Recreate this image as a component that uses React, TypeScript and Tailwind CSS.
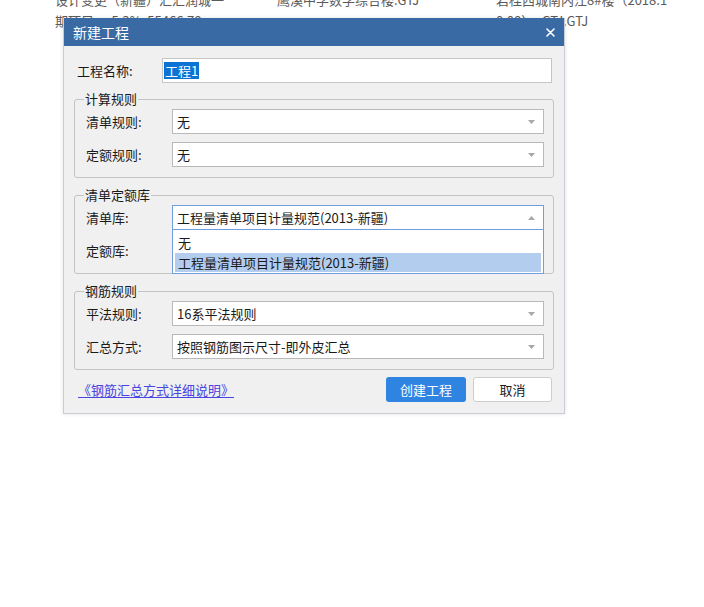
import React from "react";

const font = { fontFamily: '"Noto Sans CJK SC", "Noto Sans", sans-serif' };

function Arrow({ up = false }: { up?: boolean }) {
  return (
    <svg width="7" height="4" viewBox="0 0 7 4" className="shrink-0">
      {up ? <path d="M0 4 L3.5 0 L7 4 Z" fill="#a8a8a8" /> : <path d="M0 0 L7 0 L3.5 4 Z" fill="#a8a8a8" />}
    </svg>
  );
}

function Select({ value, active = false, children }: { value: string; active?: boolean; children?: React.ReactNode }) {
  return (
    <div className="relative w-[372px]">
      <div
        className={
          "flex h-[25px] items-center justify-between bg-white pl-[4px] pr-[8px] text-[13px] text-[#1a1a1a] border " +
          (active ? "border-[#6f9fe0]" : "border-[#b9b9b9]")
        }
      >
        <span className="leading-[16px]">{value}</span>
        <Arrow up={active} />
      </div>
      {children}
    </div>
  );
}

function Row({ label, children }: { label: string; children: React.ReactNode }) {
  return (
    <div className="flex items-center">
      <div className="w-[97px] pl-[11px] text-[13px] text-[#1a1a1a] leading-[16px]">{label}</div>
      {children}
    </div>
  );
}

function Group({ title, children }: { title: string; children: React.ReactNode }) {
  return (
    <fieldset className="mx-[10px] rounded-[3px] border border-[#c4c4c4] bg-[#f0f0f0] pb-[10px]">
      <legend className="ml-[9px] px-[1px] text-[13px] leading-[16px] text-[#1a1a1a]">{title}</legend>
      <div className="flex flex-col gap-[8px] pt-[2px]">{children}</div>
    </fieldset>
  );
}

export default function App() {
  return (
    <div className="relative h-[607px] w-[704px] overflow-hidden bg-white" style={font}>
      {/* background list */}
      <div className="mt-[-8px] flex flex-col gap-[5px] text-[13px] leading-[16px] text-[#5a5a5a]">
        <div className="flex">
          <span className="ml-[55px] w-[222px]">设计变更（新疆）汇汇润城一</span>
          <span className="w-[219px]">鹰溪中学数学综合楼.GTJ</span>
          <span>岩桂西城南内江8#楼（2018.1</span>
        </div>
        <div className="flex">
          <span className="ml-[55px] w-[441px]">期项目&nbsp;&nbsp;&nbsp;&nbsp;&nbsp;&nbsp;5.3%&nbsp;&nbsp;55466.78</span>
          <span>0.08）- GTJ.GTJ</span>
        </div>
      </div>

      {/* dialog */}
      <div className="absolute left-[63px] top-[18px] flex w-[502px] flex-col border border-t-0 border-[#c9ced6] bg-[#f0f0f0] shadow-[0_0_4px_rgba(0,0,0,0.12)]">
        <div className="flex h-[28px] items-center justify-between bg-[#3a6aa4] pl-[9px] pr-[9px] text-white">
          <span className="text-[14px] leading-[16px]">新建工程</span>
          <svg width="9" height="9" viewBox="0 0 9 9">
            <path d="M1 1 L8 8 M8 1 L1 8" stroke="white" strokeWidth="1.6" strokeLinecap="round" />
          </svg>
        </div>

        <div className="flex items-center pt-[12px]">
          <div className="w-[98px] pl-[13px] text-[13px] leading-[16px] text-[#1a1a1a]">工程名称:</div>
          <div className="flex h-[25px] w-[390px] items-center border border-[#c6c6c6] bg-white pl-[1px]">
            <span className="bg-[#0a73d4] px-[1px] text-[13px] leading-[17px] text-white">工程1</span>
          </div>
        </div>

        <div className="mt-[8px] flex flex-col gap-[9px]">
          <Group title="计算规则">
            <Row label="清单规则:">
              <Select value="无" />
            </Row>
            <Row label="定额规则:">
              <Select value="无" />
            </Row>
          </Group>

          <Group title="清单定额库">
            <Row label="清单库:">
              <Select value="工程量清单项目计量规范(2013-新疆)" active>
                <div className="absolute left-0 right-0 top-[24px] z-10 flex h-[45px] flex-col border border-[#6f9fe0] bg-white px-[2px] pt-[3px] text-[13px] text-[#1a1a1a]">
                  <div className="flex h-[20px] items-center pl-[3px] leading-[16px]">无</div>
                  <div className="flex h-[19px] items-center bg-[#b3cdee] pl-[3px] leading-[16px]">工程量清单项目计量规范(2013-新疆)</div>
                </div>
              </Select>
            </Row>
            <Row label="定额库:">
              <Select value="" />
            </Row>
          </Group>

          <Group title="钢筋规则">
            <Row label="平法规则:">
              <Select value="16系平法规则" />
            </Row>
            <Row label="汇总方式:">
              <Select value="按照钢筋图示尺寸-即外皮汇总" />
            </Row>
          </Group>
        </div>

        <div className="flex items-center justify-between pb-[11px] pl-[14px] pr-[12px] pt-[7px]">
          <span className="text-[13px] leading-[16px] text-[#4a44e0] underline underline-offset-2">《钢筋汇总方式详细说明》</span>
          <div className="flex gap-[7px]">
            <button className="h-[25px] w-[80px] rounded-[3px] bg-[#2f84e2] text-[13px] text-white">创建工程</button>
            <button className="h-[25px] w-[79px] rounded-[3px] border border-[#cdcdcd] bg-white text-[13px] text-[#1a1a1a]">取消</button>
          </div>
        </div>
      </div>
    </div>
  );
}
